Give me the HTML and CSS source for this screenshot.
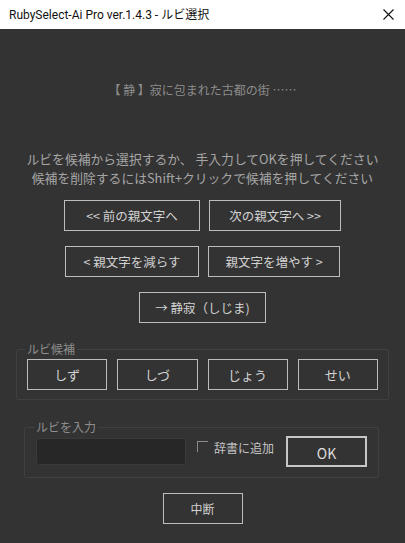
FILE: index.html
```html
<!DOCTYPE html>
<html lang="ja">
<head>
<meta charset="utf-8">
<title>RubySelect-Ai Pro - ルビ選択</title>
<link rel="stylesheet" href="styles.css">
</head>
<body>
<div class="window">
  <header class="titlebar">
    <span class="title">RubySelect-Ai Pro ver.1.4.3 - ルビ選択</span>
    <svg class="close" width="11" height="11" viewBox="0 0 11 11" aria-hidden="true">
      <path d="M0.5 0.5 L10.5 10.5 M10.5 0.5 L0.5 10.5" stroke="#111" stroke-width="1.1" fill="none"/>
    </svg>
  </header>
  <main class="content">
    <p class="sentence">【 静 】寂に包まれた古都の街 ……</p>
    <p class="instructions">ルビを候補から選択するか、 手入力してOKを押してください<br>候補を削除するにはShift+クリックで候補を押してください</p>
    <div class="nav">
      <div class="nav-row">
        <button class="btn w-prev">&lt;&lt; 前の親文字へ</button>
        <button class="btn w-next">次の親文字へ &gt;&gt;</button>
      </div>
      <div class="nav-row">
        <button class="btn w-dec">&lt; 親文字を減らす</button>
        <button class="btn w-inc">親文字を増やす &gt;</button>
      </div>
      <div class="nav-row">
        <button class="btn w-cur">→ 静寂（しじま)</button>
      </div>
    </div>
    <fieldset class="group candidates">
      <legend class="group-label">ルビ候補</legend>
      <div class="cand-row">
        <button class="btn cand">しず</button>
        <button class="btn cand">しづ</button>
        <button class="btn cand">じょう</button>
        <button class="btn cand">せい</button>
      </div>
    </fieldset>
    <fieldset class="group entry">
      <legend class="group-label">ルビを入力</legend>
      <div class="entry-row">
        <input class="ruby-input" type="text" aria-label="ルビ">
        <label class="dict">
          <span class="check"></span>
          <span class="dict-text">辞書に追加</span>
        </label>
        <button class="btn ok">OK</button>
      </div>
    </fieldset>
    <button class="btn abort">中断</button>
  </main>
</div>
</body>
</html>
```

FILE: styles.css
```css
html, body {
  margin: 0;
  padding: 0;
  background: #333333;
}

body {
  font-family: "Noto Sans CJK JP", "Noto Sans", sans-serif;
}

.window {
  width: 405px;
  height: 543px;
  display: flex;
  flex-direction: column;
  background: #333333;
}

.titlebar {
  height: 29px;
  background: #ffffff;
  display: flex;
  align-items: center;
  justify-content: space-between;
  padding: 0 11px 0 9px;
  flex: none;
}

.title {
  font-family: "Roboto", "Noto Sans CJK JP", sans-serif;
  font-size: 12px;
  line-height: 16px;
  color: #111111;
}

.close {
  display: block;
}

.content {
  flex: 1;
  display: flex;
  flex-direction: column;
  align-items: center;
  padding-top: 52px;
}

.sentence {
  margin: 0;
  font-size: 12px;
  line-height: 18px;
  color: #8c8c8c;
}

.instructions {
  margin: 50px 0 0;
  font-size: 12.8px;
  line-height: 19px;
  color: #a6a6a6;
  text-align: center;
}

.nav {
  margin-top: 13px;
  display: flex;
  flex-direction: column;
  gap: 15px;
}

.nav-row {
  display: flex;
  justify-content: center;
  gap: 9px;
}

.btn {
  box-sizing: border-box;
  height: 31px;
  margin: 0;
  padding: 0;
  background: transparent;
  border: 1px solid #bdbdbd;
  border-radius: 0;
  color: #d2d2d2;
  font-family: "Noto Sans CJK JP", "Noto Sans", sans-serif;
  font-size: 12.5px;
  line-height: 18px;
}

.w-prev { width: 136px; }
.w-next { width: 132px; }
.w-dec { width: 134px; }
.w-inc { width: 132px; }
.w-cur { width: 127px; }

.group {
  align-self: stretch;
  margin: 0;
  border: 1px solid #404040;
  border-radius: 2px;
  min-width: 0;
}

.group-label {
  padding: 0 2px;
  margin-left: -2px;
  font-size: 12px;
  line-height: 18px;
  color: #8e8e8e;
}

.candidates {
  margin: 17px 16px 0 16px;
  padding: 1px 10px 9px 10px;
}

.cand-row {
  display: flex;
  gap: 10px;
}

.cand {
  width: 81px;
  font-size: 13px;
}

.entry {
  margin: 18px 26px 0 24px;
  padding: 0 10px 10px 11px;
}

.entry-row {
  display: flex;
  align-items: center;
}

.ruby-input {
  box-sizing: border-box;
  width: 150px;
  height: 27px;
  margin: 0;
  background: #272727;
  border: 1px solid #3a3a3a;
  border-radius: 3px;
  color: #dddddd;
  outline: none;
}

.dict {
  display: flex;
  align-items: center;
  margin: 0 0 8px 11px;
}

.check {
  box-sizing: border-box;
  width: 11px;
  height: 11px;
  border-top: 1px solid #8a8a8a;
  border-left: 1px solid #8a8a8a;
  margin-top: -2px;
}

.dict-text {
  margin-left: 6px;
  font-size: 12px;
  line-height: 18px;
  color: #c4c4c4;
}

.ok {
  margin-left: 12px;
  width: 81px;
  height: 31px;
  border: 2px solid #c6c6c6;
  font-size: 14px;
  color: #dcdcdc;
  padding-top: 3px;
}

.abort {
  margin-top: 15px;
  width: 80px;
  height: 31px;
  font-size: 12px;
}
```
